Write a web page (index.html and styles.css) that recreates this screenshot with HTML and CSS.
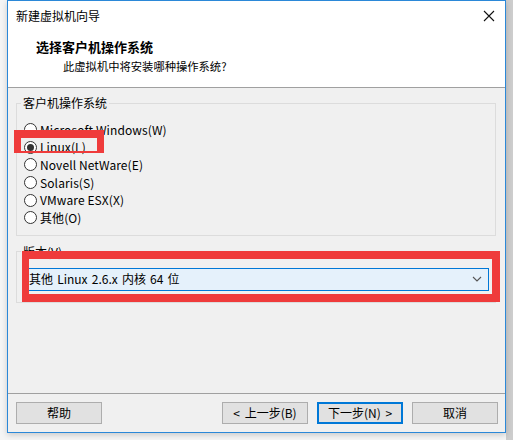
FILE: index.html
```html
<!DOCTYPE html>
<html lang="zh-CN">
<head>
<meta charset="utf-8">
<title>新建虚拟机向导</title>
<link rel="stylesheet" href="styles.css">
</head>
<body>
<div class="window">
  <div class="titlebar">
    <span class="title">新建虚拟机向导</span>
    <svg class="close" width="12" height="12" viewBox="0 0 12 12"><path d="M1 1 L11 11 M11 1 L1 11" stroke="#111" stroke-width="1.1" fill="none"/></svg>
  </div>
  <div class="header">
    <div class="h-title">选择客户机操作系统</div>
    <div class="h-sub">此虚拟机中将安装哪种操作系统?</div>
  </div>
  <div class="body">
    <div class="main">
      <fieldset class="group group-os">
        <legend>客户机操作系统</legend>
        <div class="radio-row"><span class="radio"></span><span class="label">Microsoft Windows(W)</span></div>
        <div class="radio-row"><span class="radio checked"></span><span class="label">Linux(L)</span></div>
        <div class="radio-row"><span class="radio"></span><span class="label">Novell NetWare(E)</span></div>
        <div class="radio-row"><span class="radio"></span><span class="label">Solaris(S)</span></div>
        <div class="radio-row"><span class="radio"></span><span class="label">VMware ESX(X)</span></div>
        <div class="radio-row"><span class="radio"></span><span class="label">其他(O)</span></div>
      </fieldset>
      <fieldset class="group group-ver">
        <legend>版本(V)</legend>
        <div class="combo">
          <span class="combo-text">其他 Linux 2.6.x 内核 64 位</span>
          <svg class="chev" width="10" height="6" viewBox="0 0 10 6"><path d="M1 1 L5 5 L9 1" stroke="#555" stroke-width="1.1" fill="none"/></svg>
        </div>
      </fieldset>
    </div>
    <div class="footer">
      <button class="btn">帮助</button>
      <div class="spacer"></div>
      <button class="btn">&lt; 上一步(B)</button>
      <button class="btn btn-default">下一步(N) &gt;</button>
      <button class="btn">取消</button>
    </div>
  </div>
  <div class="mark mark-linux"></div>
  <div class="mark mark-version"></div>
</div>
</body>
</html>
```
FILE: styles.css
```css
html, body {
  margin: 0;
  padding: 0;
}
body {
  width: 513px;
  height: 440px;
  overflow: hidden;
  background: linear-gradient(to right, #f5f5f5 506px, #cdcdcd 506px);
  font-family: "Noto Sans CJK SC", "Microsoft YaHei", sans-serif;
  font-size: 12px;
  color: #000;
}
.window {
  position: relative;
  margin-left: 7px;
  width: 499px;
  height: 433px;
  box-sizing: border-box;
  border: 1px solid #2b88d8;
  background: #f0f0f0;
  display: flex;
  flex-direction: column;
  box-shadow: 0 2px 6px rgba(0, 0, 0, 0.18);
}
.titlebar {
  height: 30px;
  background: #fff;
  display: flex;
  align-items: center;
  justify-content: space-between;
  padding: 0 10px 0 8px;
}
.title {
  line-height: 16px;
}
.header {
  height: 49px;
  background: #fff;
  border-bottom: 1px solid #a0a0a0;
  padding-top: 7px;
}
.h-title {
  font-weight: bold;
  font-size: 13px;
  line-height: 18px;
  padding-left: 28px;
}
.h-sub {
  font-size: 11.3px;
  line-height: 16px;
  margin-top: 2px;
  padding-left: 55px;
}
.body {
  flex: 1;
  display: flex;
  flex-direction: column;
}
.main {
  flex: 1;
  padding: 7px 9px 0 8px;
}
.group {
  margin: 0;
  border: 1px solid #dcdcdc;
  padding: 0 6px 0 7px;
}
.group legend {
  padding: 0 2px;
  margin-left: -3px;
  line-height: 16px;
}
.group-os {
  padding-top: 10px;
  padding-bottom: 8px;
}
.group-ver {
  margin-top: 8px;
  padding-top: 8px;
  padding-bottom: 11px;
}
.radio-row {
  display: flex;
  align-items: center;
  height: 17.6px;
}
.radio {
  width: 13px;
  height: 13px;
  box-sizing: border-box;
  border: 1px solid #333;
  border-radius: 50%;
  background: #fff;
  display: flex;
  align-items: center;
  justify-content: center;
  flex: none;
}
.radio.checked::after {
  content: "";
  width: 7px;
  height: 7px;
  border-radius: 50%;
  background: #333;
}
.label {
  margin-left: 3px;
  line-height: 16px;
  letter-spacing: 0.1px;
}
.combo {
  height: 23px;
  box-sizing: border-box;
  border: 1px solid #0078d7;
  background: #e5f1fb;
  display: flex;
  align-items: center;
  justify-content: space-between;
  padding: 0 6px 0 4px;
}
.combo-text {
  line-height: 16px;
  word-spacing: 1.5px;
}
.footer {
  border-top: 1px solid #a0a0a0;
  padding: 8px 7px 8px 8px;
  display: flex;
  align-items: center;
}
.spacer {
  flex: 1;
}
.btn {
  width: 86px;
  height: 22px;
  box-sizing: border-box;
  border: 1px solid #adadad;
  background: #e1e1e1;
  font-family: inherit;
  font-size: 12px;
  color: #000;
  padding: 0;
  margin: 0 0 0 9px;
  line-height: 18px;
  word-spacing: 2px;
}
.footer .btn:first-child {
  margin-left: 0;
}
.btn-default {
  border: 1px solid #0078d7;
  box-shadow: inset 0 0 0 1px #0078d7;
}
.mark {
  position: absolute;
  box-sizing: border-box;
  border-style: solid;
  border-color: #ef3b3b;
}
.mark-linux {
  left: 6px;
  top: 129px;
  width: 90px;
  height: 23px;
  border-width: 8px 7px 2px 7px;
}
.mark-version {
  left: 14px;
  top: 250px;
  width: 478px;
  height: 51px;
  border-width: 8px 8px 8px 7px;
}
```
